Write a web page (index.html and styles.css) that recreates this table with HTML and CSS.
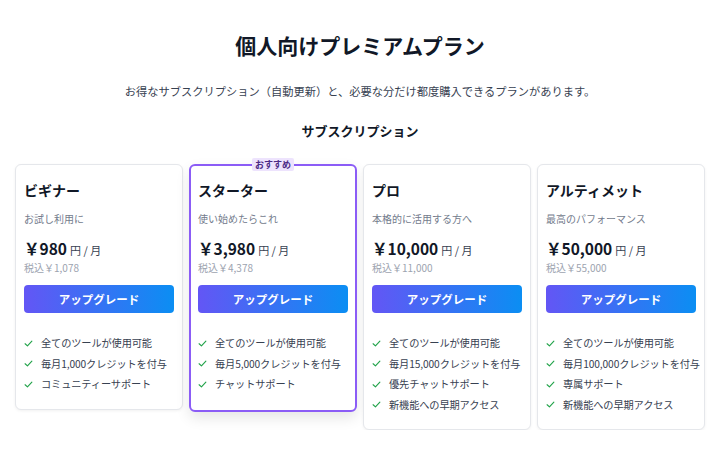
FILE: index.html
```html
<!DOCTYPE html>
<html lang="ja">
<head>
<meta charset="utf-8">
<link rel="stylesheet" href="styles.css">
</head>
<body>
<main class="page">
  <h1 class="title">個人向けプレミアムプラン</h1>
  <p class="lead">お得なサブスクリプション（自動更新）と、必要な分だけ都度購入できるプランがあります。</p>
  <h2 class="section">サブスクリプション</h2>
  <div class="cards">
    <div class="card">
      <h3 class="name">ビギナー</h3>
      <p class="desc">お試し利用に</p>
      <p class="price"><span class="amount">￥980</span> <span class="unit">円 / 月</span></p>
      <p class="tax">税込￥1,078</p>
      <button class="btn">アップグレード</button>
      <ul class="features">
        <li><svg class="check" viewBox="0 0 12 12"><path d="M1.5 6.3 L4.6 9.2 L10.5 2.8"/></svg>全てのツールが使用可能</li>
        <li><svg class="check" viewBox="0 0 12 12"><path d="M1.5 6.3 L4.6 9.2 L10.5 2.8"/></svg>毎月1,000クレジットを付与</li>
        <li><svg class="check" viewBox="0 0 12 12"><path d="M1.5 6.3 L4.6 9.2 L10.5 2.8"/></svg>コミュニティーサポート</li>
      </ul>
    </div>
    <div class="card featured">
      <span class="badge">おすすめ</span>
      <h3 class="name">スターター</h3>
      <p class="desc">使い始めたらこれ</p>
      <p class="price"><span class="amount">￥3,980</span> <span class="unit">円 / 月</span></p>
      <p class="tax">税込￥4,378</p>
      <button class="btn">アップグレード</button>
      <ul class="features">
        <li><svg class="check" viewBox="0 0 12 12"><path d="M1.5 6.3 L4.6 9.2 L10.5 2.8"/></svg>全てのツールが使用可能</li>
        <li><svg class="check" viewBox="0 0 12 12"><path d="M1.5 6.3 L4.6 9.2 L10.5 2.8"/></svg>毎月5,000クレジットを付与</li>
        <li><svg class="check" viewBox="0 0 12 12"><path d="M1.5 6.3 L4.6 9.2 L10.5 2.8"/></svg>チャットサポート</li>
      </ul>
    </div>
    <div class="card">
      <h3 class="name">プロ</h3>
      <p class="desc">本格的に活用する方へ</p>
      <p class="price"><span class="amount">￥10,000</span> <span class="unit">円 / 月</span></p>
      <p class="tax">税込￥11,000</p>
      <button class="btn">アップグレード</button>
      <ul class="features">
        <li><svg class="check" viewBox="0 0 12 12"><path d="M1.5 6.3 L4.6 9.2 L10.5 2.8"/></svg>全てのツールが使用可能</li>
        <li><svg class="check" viewBox="0 0 12 12"><path d="M1.5 6.3 L4.6 9.2 L10.5 2.8"/></svg>毎月15,000クレジットを付与</li>
        <li><svg class="check" viewBox="0 0 12 12"><path d="M1.5 6.3 L4.6 9.2 L10.5 2.8"/></svg>優先チャットサポート</li>
        <li><svg class="check" viewBox="0 0 12 12"><path d="M1.5 6.3 L4.6 9.2 L10.5 2.8"/></svg>新機能への早期アクセス</li>
      </ul>
    </div>
    <div class="card">
      <h3 class="name">アルティメット</h3>
      <p class="desc">最高のパフォーマンス</p>
      <p class="price"><span class="amount">￥50,000</span> <span class="unit">円 / 月</span></p>
      <p class="tax">税込￥55,000</p>
      <button class="btn">アップグレード</button>
      <ul class="features">
        <li><svg class="check" viewBox="0 0 12 12"><path d="M1.5 6.3 L4.6 9.2 L10.5 2.8"/></svg>全てのツールが使用可能</li>
        <li><svg class="check" viewBox="0 0 12 12"><path d="M1.5 6.3 L4.6 9.2 L10.5 2.8"/></svg>毎月100,000クレジットを付与</li>
        <li><svg class="check" viewBox="0 0 12 12"><path d="M1.5 6.3 L4.6 9.2 L10.5 2.8"/></svg>専属サポート</li>
        <li><svg class="check" viewBox="0 0 12 12"><path d="M1.5 6.3 L4.6 9.2 L10.5 2.8"/></svg>新機能への早期アクセス</li>
      </ul>
    </div>
  </div>
</main>
</body>
</html>
```

FILE: styles.css
```css
* { box-sizing: border-box; }
html, body { margin: 0; padding: 0; background: #ffffff; }
body {
  font-family: "Noto Sans CJK JP", "Noto Sans", sans-serif;
  color: #111827;
}
.page {
  padding: 32px 15px 0;
  display: flex;
  flex-direction: column;
  align-items: center;
}
.title {
  margin: 0;
  font-size: 21px;
  line-height: 26px;
  font-weight: 700;
  color: #111827;
}
.lead {
  margin: 24px 0 0;
  font-size: 11.25px;
  line-height: 18px;
  color: #374151;
}
.section {
  margin: 21px 0 0;
  font-size: 13px;
  line-height: 20px;
  font-weight: 700;
  color: #111827;
}
.cards {
  margin-top: 23px;
  width: 100%;
  display: grid;
  grid-template-columns: repeat(4, minmax(0, 1fr));
  gap: 6px;
  align-items: start;
}
.card {
  position: relative;
  border: 1px solid #e5e7eb;
  border-radius: 6px;
  padding: 15px 8px 14px 8px;
  background: #fff;
  box-shadow: 0 1px 3px rgba(0,0,0,0.06);
}
.card.featured {
  border: 2px solid #8b5cf6;
  padding: 14px 7px 15px 7px;
  box-shadow: 0 6px 14px rgba(0,0,0,0.10);
}
.badge {
  position: absolute;
  top: -8px;
  left: 50%;
  transform: translateX(-50%);
  background: #ede3fd;
  color: #4c2a85;
  font-size: 9px;
  font-weight: 700;
  line-height: 13px;
  padding: 0 3px;
  border-radius: 2px;
  white-space: nowrap;
}
.name {
  margin: 0;
  font-size: 14px;
  line-height: 20px;
  font-weight: 700;
  color: #111827;
}
.desc {
  margin: 11px 0 0;
  font-size: 10px;
  line-height: 16px;
  color: #737b8c;
}
.price {
  margin: 10px 0 0;
  line-height: 22px;
  display: flex;
  align-items: baseline;
  gap: 3px;
}
.amount {
  font-size: 15.5px;
  font-weight: 700;
  color: #111827;
}
.unit {
  font-size: 11px;
  color: #374151;
}
.tax {
  margin: 0;
  font-size: 10px;
  line-height: 14px;
  color: #9ca3af;
}
.btn {
  display: block;
  margin-top: 10px;
  width: 100%;
  height: 28px;
  border: none;
  border-radius: 4px;
  background: linear-gradient(90deg, #6356f5 0%, #0b8ef3 100%);
  color: #fff;
  font-family: inherit;
  font-size: 11.5px;
  font-weight: 700;
  cursor: pointer;
}
.features {
  list-style: none;
  margin: 20px 0 0;
  padding: 0;
}
.features li {
  display: flex;
  align-items: center;
  gap: 8px;
  font-size: 10.2px;
  letter-spacing: -0.1px;
  line-height: 20.5px;
  color: #374151;
  white-space: nowrap;
}
.check {
  width: 9px;
  height: 9px;
  flex: none;
  fill: none;
  stroke: #22a34a;
  stroke-width: 1.5;
  stroke-linecap: round;
  stroke-linejoin: round;
}
```
